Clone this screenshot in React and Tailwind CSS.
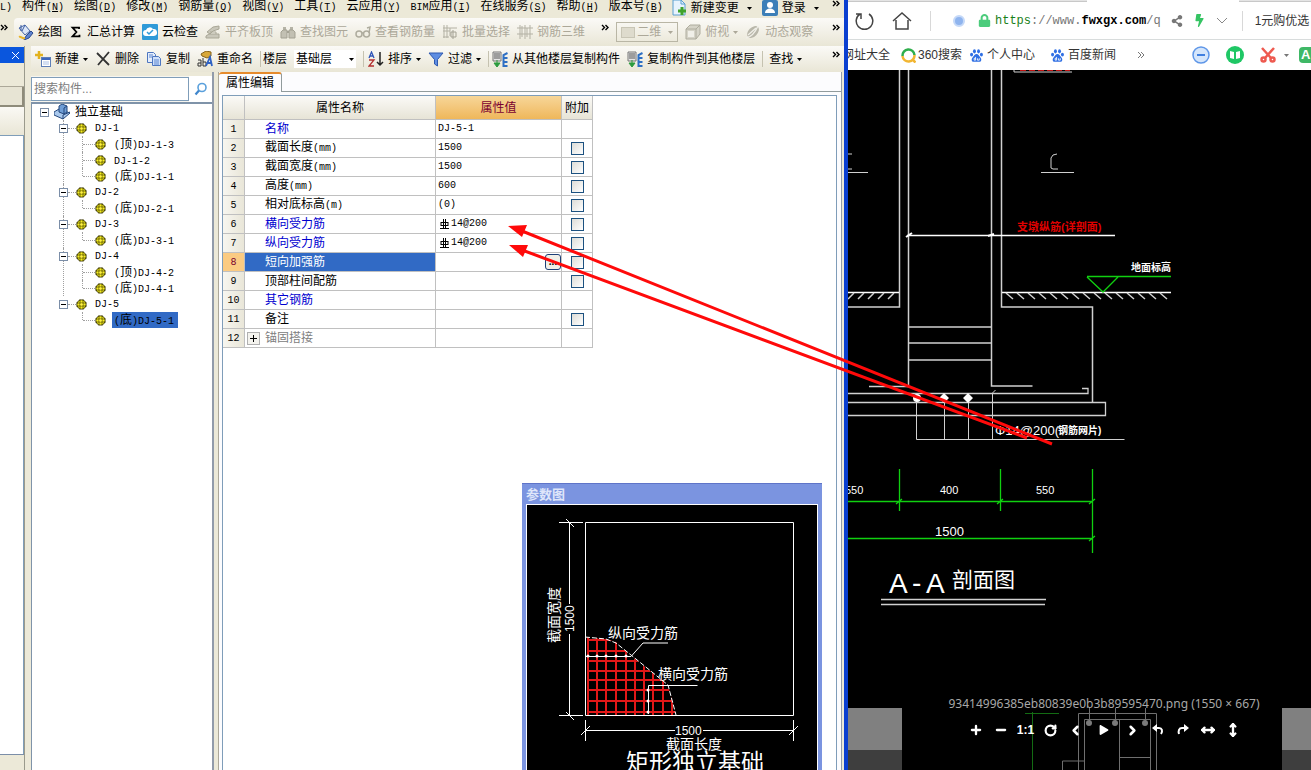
import React, { useState } from "react";
import { Minus, Plus, RotateCw, ChevronLeft, ChevronRight, MoveHorizontal, MoveVertical } from "lucide-react";
import { FaLock, FaShareAlt, FaBolt, FaPlay } from "react-icons/fa";

const menus = [
    ["构件", "N"], ["绘图", "D"], ["修改", "M"], ["钢筋量", "Q"], ["视图", "V"], ["工具", "T"],
    ["云应用", "Y"], ["BIM应用", "I"], ["在线服务", "S"], ["帮助", "H"], ["版本号", "B"],
];

const tree = [
    { name: "DJ-1", children: ["(顶)DJ-1-3", "DJ-1-2", "(底)DJ-1-1"] },
    { name: "DJ-2", children: ["(底)DJ-2-1"] },
    { name: "DJ-3", children: ["(底)DJ-3-1"] },
    { name: "DJ-4", children: ["(顶)DJ-4-2", "(底)DJ-4-1"] },
    { name: "DJ-5", children: ["(底)DJ-5-1"] },
];

const rows = [
    { name: "名称", value: "DJ-5-1", blue: true },
    { name: "截面长度(mm)", value: "1500", check: true },
    { name: "截面宽度(mm)", value: "1500", check: true },
    { name: "高度(mm)", value: "600", check: true },
    { name: "相对底标高(m)", value: "(0)", check: true },
    { name: "横向受力筋", value: "14@200", rebar: true, blue: true, check: true },
    { name: "纵向受力筋", value: "14@200", rebar: true, blue: true, check: true },
    { name: "短向加强筋", value: "", selected: true, check: true },
    { name: "顶部柱间配筋", value: "", check: true },
    { name: "其它钢筋", value: "", blue: true },
    { name: "备注", value: "", check: true },
    { name: "锚固搭接", value: "", group: true },
];

// Latin runs are half the width of a Chinese character
const T = ({ text }) =>
    text.split(/([ -~]+)/).filter(Boolean).map((part, i) =>
        /^[ -~]/.test(part)
            ? <span key={i} className="font-['Liberation_Mono',monospace] text-[10px]">{part}</span>
            : <span key={i}>{part}</span>
    );

const Caret = ({ className = "text-black" }) => (
    <svg className={`w-[5px] h-[3px] shrink-0 ${className}`} viewBox="0 0 5 3"><path d="M0 0h5L2.5 3z" fill="currentColor" /></svg>
);

const More = () => (
    <button aria-label="更多" className="shrink-0">
        <svg className="w-2 h-2" viewBox="0 0 8 8" fill="none" stroke="#000" strokeWidth="1.4"><path d="M1 1l2.500 2.500L1 6M4.500 1L7 3.500L4.500 6" /></svg>
    </button>
);

const Sep = () => <span className="w-px h-4 bg-[#c5c2b0] shrink-0" />;

const Svg = ({ children, className = "w-4 h-4" }) => (
    <svg className={`shrink-0 ${className}`} viewBox="0 0 16 16" fill="none">{children}</svg>
);

const icons = {
    draw: (
        <Svg>
            <path d="M1 4l6-3 5 6-5 4z" fill="#dce6f7" stroke="#4867a8" />
            <path d="M3 1v6M7 1l-3 6" stroke="#3b5aa0" />
            <path d="M8 12l5-5 2 2-4 5-5 2z" fill="#5d83cf" stroke="#2c4a8e" />
            <path d="M1 13c2-1 3 2 6 1" stroke="#e9b52c" strokeWidth="2" />
        </Svg>
    ),
    sum: <Svg className="w-[14px] h-[14px]"><path d="M11.500 4.500V3H4l4.500 5L4 13h8v-2" stroke="#000" strokeWidth="2" /></Svg>,
    cloud: (
        <Svg>
            <rect width="16" height="16" rx="1" fill="#2f9ad8" />
            <path d="M4 12a3 3 0 010-6 4 4 0 017-1 3.500 3.500 0 011 7z" fill="#fff" />
            <path d="M5 8l2 2 4-4" stroke="#2f9ad8" strokeWidth="1.5" />
        </Svg>
    ),
    slab: (
        <Svg>
            <path d="M1 12l3-2h10v4H1zM2 8l6-5 6-1v3L8 7l-3 3z" fill="#c9c7ba" stroke="#a9a797" />
            <path d="M5 8h6v2" stroke="#a9a797" />
        </Svg>
    ),
    find: (
        <Svg>
            <path d="M3 3h3v4H3zM10 3h3v4h-3z" fill="#b5b3a6" />
            <path d="M1 8l2-2h4v8H1zM9 6h4l2 2v6H9z" fill="#c2c0b3" stroke="#a3a193" />
            <path d="M7 8h2" stroke="#a3a193" strokeWidth="2" />
        </Svg>
    ),
    glasses: (
        <Svg>
            <circle cx="4" cy="10" r="3" stroke="#aeac9e" strokeWidth="1.5" />
            <circle cx="11.500" cy="10" r="3" stroke="#aeac9e" strokeWidth="1.5" />
            <path d="M7 9h2M14 9l1-6-3 1" stroke="#aeac9e" strokeWidth="1.5" />
        </Svg>
    ),
    batch: (
        <Svg>
            <path d="M2 1v13M5 1v13M1 4h14M1 7h7M1 13h6M8 4v8" stroke="#b3b1a4" />
            <path d="M9 8h5v5H9zM11 6v9" stroke="#a3a193" />
        </Svg>
    ),
    grid: <Svg><path d="M3 1v14M8 1v14M13 1v14M0 4h16M0 10h16M5 2v11M10 4v9" stroke="#b3b1a4" /></Svg>,
    cube: (
        <Svg>
            <path d="M1 5l4-4h10v9l-4 5H1z" fill="#d5d3c7" stroke="#aeac9e" />
            <path d="M1 5h10v10M11 5l4-4" stroke="#aeac9e" />
            <path d="M3 7h6v6H3z" fill="#f0efe8" />
        </Svg>
    ),
    orbit: (
        <Svg>
            <ellipse cx="8" cy="8" rx="7" ry="4.500" transform="rotate(-45 8 8)" fill="#b9b7aa" />
            <path d="M1 14c5-1 9-5 12-12M3 11l8-7" stroke="#f0efe8" strokeWidth="1.3" />
        </Svg>
    ),
    create: (
        <Svg>
            <path d="M4 0v8M0 4h8" stroke="#e2b21e" strokeWidth="2.500" />
            <rect x="6.500" y="6.500" width="9" height="9" fill="#fff" stroke="#5e7fb8" />
            <path d="M7 8h8" stroke="#3f68bd" strokeWidth="2" />
            <path d="M8 11h6M8 13h6" stroke="#a8bfe6" />
        </Svg>
    ),
    remove: <Svg><path d="M2 2l12 12M14 1L3 14" stroke="#333" strokeWidth="1.8" /></Svg>,
    copy: (
        <Svg>
            <path d="M1.500 1.500h6l2 2v8h-8z" fill="#e5eefc" stroke="#4d76c0" />
            <path d="M6.500 5.500h6l2 2v7h-8z" fill="#cfe0fa" stroke="#4d76c0" />
            <path d="M8 9h5M8 11h5M8 13h5M3 4h4M3 6h3" stroke="#5c86d0" />
        </Svg>
    ),
    rename: (
        <Svg>
            <path d="M4 3l5-3 5 1v4l-4 2-5-2z" fill="#d8a83a" stroke="#86621a" />
            <path d="M1 9h3v6H1v-3h3M6 7v8h3v-4H6" stroke="#333" />
            <path d="M9 15l4-9 2 9M10 12h5" stroke="#2f62c4" strokeWidth="1.800" />
        </Svg>
    ),
    sort: (
        <Svg>
            <path d="M1 7l2.500-6L6 7M2 5h3" stroke="#2f56b8" strokeWidth="1.300" />
            <path d="M1 9h5l-5 6h5" stroke="#b22f2f" strokeWidth="1.300" />
            <path d="M12 1v13M9 11l3 3 3-3" stroke="#222" strokeWidth="1.500" />
        </Svg>
    ),
    filter: <Svg><path d="M1 2h14L9.500 8.500V15l-3-2V8.500z" fill="#5f8ee2" stroke="#2e59b0" /></Svg>,
    floor: (
        <Svg>
            <path d="M1 1h8v9H1z" fill="#e6e6e6" stroke="#777" />
            <path d="M2 3h6M2 5h6M2 7h6" stroke="#555" />
            <path d="M5 9v4M2 12l3 4 3-4z" fill="#2c9b3f" stroke="#2c9b3f" />
            <path d="M15.500 2l-4 2v11h4M11.500 7h4M11.500 11h4" stroke="#2d6fc4" strokeWidth="2" />
        </Svg>
    ),
    change: (
        <Svg>
            <path d="M2 0h8l4 4v11H2z" fill="#e7f3fd" stroke="#5a9fd0" />
            <path d="M10 0v4h4" stroke="#5a9fd0" />
            <path d="M11 7v8M7 11h8" stroke="#3fa32b" strokeWidth="3" />
        </Svg>
    ),
    user: (
        <Svg>
            <rect width="16" height="16" rx="2" fill="#3c7fb8" />
            <circle cx="8" cy="5" r="3" fill="#fff" />
            <path d="M3 13c0-6 10-6 10 0z" fill="#fff" />
        </Svg>
    ),
};

const Tool = ({ icon, label, caret, disabled }) => (
    <button disabled={disabled} className={`flex items-center gap-1 shrink-0 whitespace-nowrap ${disabled ? "text-[#aca899]" : "text-black"}`}>
        {icons[icon]}
        {label && <span>{label}</span>}
        {caret && <Caret className={disabled ? "text-[#aca899]" : "text-black"} />}
    </button>
);

const Gear = () => (
    <svg className="w-[11px] h-[11px] shrink-0" viewBox="0 0 11 11">
        <circle cx="5.500" cy="5.500" r="5" fill="#2f2c00" />
        <circle cx="5.500" cy="5.500" r="4.200" fill="#f6ee20" />
        <path d="M4 0v11M7 0v11M0 4h11M0 7h11" stroke="#4a4600" strokeWidth="0.700" />
        <circle cx="5.500" cy="5.500" r="1.200" fill="#fff04a" />
    </svg>
);

const Toggle = () => (
    <button aria-label="折叠" className="w-[9px] h-[9px] shrink-0 border border-[#7b8ea8] bg-white flex items-center justify-center">
        <span className="w-[5px] h-px bg-black" />
    </button>
);

const MenuBar = () => (
    <div className="flex items-start h-[18px] leading-3 bg-[#ece9d8] pr-1 overflow-hidden shrink-0">
        <div className="flex gap-[10px] whitespace-nowrap">
            <button><T text="L)" /></button>
            {menus.map(([name, key]) => (
                <button key={key}>
                    <T text={name} />
                    <span className="font-['Liberation_Mono',monospace] text-[10px]">(<u>{key}</u>)</span>
                </button>
            ))}
        </div>
        <div className="flex-1 flex items-center gap-2.5 pl-2">
            <button className="flex items-center gap-1 shrink-0 whitespace-nowrap">{icons.change}<span className="pr-1">新建变更</span><Caret /></button>
            <button className="flex items-center gap-1 shrink-0 whitespace-nowrap">{icons.user}<span className="pr-1">登录</span><Caret /></button>
        </div>
        <More />
    </div>
);

const UpperToolbar = () => (
    <div className="flex items-center h-7 bg-[#ece9d8] shrink-0">
        <span className="flex pb-2"><More /></span>
        <div className="flex items-center gap-[7px] h-full flex-1 ml-1.5 pl-1 pr-1 rounded-l bg-linear-to-b from-[#fbfaf7] to-[#e9e6d6]">
            <Tool icon="draw" label="绘图" />
            <Tool icon="sum" label="汇总计算" />
            <Tool icon="cloud" label="云检查" />
            <Tool icon="slab" label="平齐板顶" disabled />
            <Tool icon="find" label="查找图元" disabled />
            <Tool icon="glasses" label="查看钢筋量" disabled />
            <Tool icon="batch" label="批量选择" disabled />
            <Tool icon="grid" label="钢筋三维" disabled />
            <span className="flex items-center pl-[9px] pb-2"><More /></span>
            <div className="flex items-center w-[62px] h-5 pl-1 pr-1 gap-0.5 border border-[#b9b6a5] text-[#aca899] shrink-0">
                <span className="w-[14px] h-[11px] bg-[#dedbcd] border border-[#c8c5b5] shrink-0" />
                <select aria-label="视图维度" disabled className="appearance-none w-[30px]">
                    <option>二维</option>
                </select>
                <Caret className="text-[#aca899]" />
            </div>
            <Tool icon="cube" label="俯视" caret disabled />
            <Tool icon="orbit" label="动态观察" disabled />
            <span className="ml-auto pb-2"><More /></span>
        </div>
    </div>
);

const LowerToolbar = () => (
    <div className="flex items-center gap-[7px] h-[26px] pl-1 pr-1 bg-linear-to-b from-[#fbfaf7] to-[#e9e6d6] shrink-0">
        <Tool icon="create" label="新建" caret />
        <Tool icon="remove" label="删除" />
        <Tool icon="copy" label="复制" />
        <Tool icon="rename" label="重命名" />
        <label htmlFor="floor" className="flex items-center gap-0.5 shrink-0 whitespace-nowrap"><Sep />楼层</label>
        <div className="flex items-center w-[62px] h-[18px] px-0.5 bg-white shrink-0">
            <select id="floor" className="appearance-none flex-1 min-w-0 outline-none">
                <option>基础层</option>
            </select>
            <Caret />
        </div>
        <div className="flex items-center gap-1"><Sep /><Tool icon="sort" label="排序" caret /></div>
        <Tool icon="filter" label="过滤" caret />
        <div className="flex items-center gap-[3px]"><Sep /><Tool icon="floor" label="从其他楼层复制构件" /></div>
        <Tool icon="floor" label="复制构件到其他楼层" />
        <div className="flex items-center gap-[6px]"><Sep /><Tool label="查找" caret /></div>
        <span className="ml-auto pb-2"><More /></span>
    </div>
);

const Dock = () => (
    <aside className="w-[25px] shrink-0 flex flex-col border-r border-[#9a9a8c]">
        <div className="h-4 mt-px bg-[#0a56dd] text-white flex items-center justify-end px-1 shrink-0">
            <button aria-label="关闭">
                <svg className="w-[9px] h-[9px]" viewBox="0 0 9 9" stroke="#fff"><path d="M1 1l7 7M8 1L1 8" /></svg>
            </button>
        </div>
        <div className="h-6 border-b border-[#aca899] bg-[#ece9d8] shrink-0" />
        <div className="h-5 border-r-2 border-b-2 border-[#8e8b7a] bg-[#e7e4d4] shrink-0" />
        <div className="h-7 bg-linear-to-b from-[#faf9f4] to-[#e9e6d6] shrink-0" />
        <div className="flex-1 border-t border-r border-[#7f9db9] bg-white" />
        <div className="h-4 border-t border-[#7b8ea8] bg-[#ece9d8] shrink-0" />
    </aside>
);

const ComponentTree = ({ selected, onSelect }) => (
    <section className="w-[183px] shrink-0 flex flex-col border-r-2 border-[#919baa]">
        <div className="flex h-[26px] mt-1 bg-[#f6f5ef] shrink-0">
            <input aria-label="搜索构件" placeholder="搜索构件..." className="w-[158px] h-6 border border-[#7f9db9] bg-white px-0.5 mt-px outline-none placeholder:text-[#808080]" />
            <button aria-label="搜索" className="flex-1 flex items-center justify-center bg-white">
                <svg className="w-[14px] h-[14px]" viewBox="0 0 14 14" fill="none">
                    <circle cx="8" cy="5.500" r="4" stroke="#5aa0dc" strokeWidth="1.600" />
                    <path d="M5 8.500L1.500 12.500" stroke="#3f86cc" strokeWidth="2.200" />
                </svg>
            </button>
        </div>
        <div className="flex-1 border-t-2 border-l border-[#7f93a9] bg-white leading-4">
            <div className="flex items-center h-4 pl-2 gap-[5px]">
                <Toggle />
                <Svg>
                    <path d="M0 8l5-3 11 4-7 6-9-4z" fill="#a9c8ec" stroke="#23477c" />
                    <path d="M5 2l3-2 5 2v6l-3 2-5-2z" fill="#6f9ed6" stroke="#23477c" />
                    <path d="M9 15v-4l7-3M10 10V4l3-2" stroke="#23477c" />
                </Svg>
                <span>独立基础</span>
            </div>
            <ul className="ml-[31px]">
                {tree.map((node, n) => (
                    <li key={node.name} className={n < tree.length - 1 ? "border-l border-dotted border-[#a0a0a0]" : "border-l border-transparent"}>
                        <div className="flex items-center h-4 -ml-[5px]">
                            <Toggle />
                            <span className="w-2 border-t border-dotted border-[#a0a0a0]" />
                            <Gear />
                            <button className="ml-2"><T text={node.name} /></button>
                        </div>
                        <ul className="ml-[18px]">
                            {node.children.map((name, i) => (
                                <li key={name} className="flex items-center h-4">
                                    <span className={`self-start border-dotted border-[#a0a0a0] border-l w-px ${i === node.children.length - 1 ? "h-2" : "h-4"}`} />
                                    <span className="w-3 border-t border-dotted border-[#a0a0a0]" />
                                    <Gear />
                                    <button
                                        onClick={() => onSelect(name)}
                                        className={`ml-[6px] h-4 pl-0.5 pr-1 whitespace-nowrap ${selected === name ? "bg-[#316ac5]" : ""}`}
                                    >
                                        <T text={name} />
                                    </button>
                                </li>
                            ))}
                        </ul>
                    </li>
                ))}
            </ul>
        </div>
    </section>
);

const PropertyTable = () => (
    <table className="table-fixed w-[370px] border-separate border-spacing-0 leading-4">
        <colgroup>
            <col className="w-[22px]" />
            <col className="w-[191px]" />
            <col className="w-[126px]" />
            <col className="w-[31px]" />
        </colgroup>
        <thead>
            <tr className="h-6 bg-linear-to-b from-[#fbfaf7] to-[#e6e3d5]">
                <th aria-label="序号" className="border-r border-b border-[#c0c0c0]" />
                <th className="font-normal p-0 border-r border-b border-[#c0c0c0]">属性名称</th>
                <th className="font-normal p-0 border-r border-b border-[#c0c0c0] bg-linear-to-b from-[#f7d698] to-[#efb75a] text-[#7a0030]">属性值</th>
                <th className="font-normal p-0 border-r border-b border-[#c0c0c0]">附加</th>
            </tr>
        </thead>
        <tbody>
            {rows.map((row, i) => (
                <tr key={row.name} className="h-[19px]">
                    <td className={`p-0 text-center border-r border-b border-[#c0c0c0] ${row.selected ? "bg-[#fbcb82] text-[#7a0030]" : "bg-linear-to-r from-[#f7f6f0] to-[#e9e6d8]"}`}>
                        <T text={String(i + 1)} />
                    </td>
                    <td className={`p-0 border-r border-b border-[#c0c0c0] ${row.selected ? "bg-[#316ac5] text-white" : row.blue ? "text-[#0000d0]" : row.group ? "text-[#808080]" : ""}`}>
                        <div className="flex items-center h-[18px]">
                            <span className="w-5 pl-0.5 flex">
                                {row.group && (
                                    <button aria-label="展开" className="w-[13px] h-[13px] border border-[#b0b0b0] bg-[#f4f3ee] flex items-center justify-center">
                                        <svg className="w-[7px] h-[7px]" viewBox="0 0 7 7" stroke="#000"><path d="M0 3.500h7M3.500 0v7" /></svg>
                                    </button>
                                )}
                            </span>
                            <span><T text={row.name} /></span>
                        </div>
                    </td>
                    <td className="p-0 border-r border-b border-[#c0c0c0]">
                        <div className="flex items-center h-[18px] pl-0.5">
                            {row.rebar && (
                                <svg className="w-[9px] h-[10px] ml-0.5 mr-0.5" viewBox="0 0 9 10" fill="none" stroke="#000">
                                    <path d="M3.500 0v9M5.500 0v9M1 3.500h7M1 3v4M8 3v4M1 6.500h7M0 9.500h9" />
                                </svg>
                            )}
                            <T text={row.value} />
                            {row.selected && (
                                <button className="ml-auto w-4 h-4 rounded-[3px] border border-[#1c3f77] bg-[#f0efe8] leading-[8px] text-[10px] font-bold">...</button>
                            )}
                        </div>
                    </td>
                    <td className="p-0 border-r border-b border-[#c0c0c0]">
                        {row.check && (
                            <div className="flex justify-center">
                                <input type="checkbox" aria-label={row.name} className="appearance-none w-[13px] h-[13px] border border-[#1c5180] bg-linear-to-br from-[#dcdcd7] to-white checked:bg-[#316ac5]" />
                            </div>
                        )}
                    </td>
                </tr>
            ))}
        </tbody>
    </table>
);

const ParameterWindow = () => (
    <div className="absolute left-[303px] top-[411px] bottom-0 w-[300px] flex flex-col bg-[#7b94e0] border-t border-[#5f74c8] overflow-hidden">
        <h2 className="h-5 pl-1 leading-[22px] text-[13px] font-bold text-[#dfe6fa] shrink-0">参数图</h2>
        <div className="flex-1 mx-1 border border-b-0 border-white bg-black overflow-hidden">
            <svg width="290" height="265" viewBox="527 505 290 265" fill="none" stroke="#fff" fontSize="14" fontFamily="Liberation Sans, Noto Sans CJK SC, sans-serif">
                <defs>
                    <clipPath id="mesh"><path d="M585 637L606 639L616 642L631 656L668 685L676 715H585z" /></clipPath>
                </defs>
                <g clipPath="url(#mesh)" stroke="#e01818" strokeWidth="2">
                    {[588, 597, 606, 616, 626, 635, 644, 653, 663, 672].map((x) => <path key={x} d={`M${x} 636V715`} />)}
                    {[640, 651, 661, 671, 680, 690, 701, 712].map((y) => <path key={y} d={`M587 ${y}H678`} />)}
                </g>
                <path d="M585.500 522.500h208v193h-208z" />
                <path d="M585 637l21 2l10 4l15 12l37 30l8 30" strokeDasharray="5 2" />
                <path d="M586 656.500H631l12-13.500h25M648.500 714V685.500h49" />
                <g fill="#fff" stroke="none">
                    {[588, 597, 606, 616, 626].map((x) => <circle key={x} cx={x} cy="656" r="1.500" />)}
                    {[690, 701, 712].map((y) => <circle key={y} cx="648" cy={y} r="1.500" />)}
                </g>
                <path d="M569.500 522V604M569.500 634V716M559 522.500h24M559 715.500h24M566 519l8 8M566 712l8 8" />
                <path d="M585.500 720v21M793.500 720v21M585 730.500h90M703 730.500h91M581 735l9-9M789 735l9-9" />
                <g fill="#fff" stroke="none">
                    <text x="608" y="638">纵向受力筋</text>
                    <text x="658" y="679">横向受力筋</text>
                    <text x="675" y="735" fontSize="12">1500</text>
                    <text x="666" y="749">截面长度</text>
                    <text x="626" y="770" fontSize="23" fontFamily="Liberation Serif, Noto Sans CJK SC, serif">矩形独立基础</text>
                    <text transform="translate(559 643) rotate(-90)">截面宽度</text>
                    <text transform="translate(574 632) rotate(-90)" fontSize="12">1500</text>
                </g>
            </svg>
        </div>
    </div>
);

const PropertyPanel = () => (
    <section className="relative flex-1 min-w-0 flex flex-col ml-1 border-l border-[#aca899] bg-[#fcfcfe]">
        <div className="flex h-5 shrink-0">
            <button className="w-[63px] border-t-2 border-r border-t-[#e68b2c] border-r-[#919b9c] rounded-t-[3px] leading-4">属性编辑</button>
            <span className="flex-1 border-b border-[#919b9c]" />
        </div>
        <div className="flex-1 mt-[3px] ml-[3px] mr-1 border-t border-l border-r border-[#7f9db9] bg-white overflow-hidden">
            <PropertyTable />
        </div>
        <ParameterWindow />
    </section>
);

const hatch = (from, to, step, dx) => {
    const d = [];
    for (let x = from; x < to; x += step) d.push(`M${x} 293l${dx} 6`);
    return d.join("");
};

const SectionDrawing = () => (
    <svg className="absolute left-0 top-0" width="463" height="700" viewBox="848 70 463 700" fill="none" stroke="#d0d0d0" fontFamily="Liberation Sans, Noto Sans CJK SC, sans-serif">
        <path d="M899.500 70V307H848M908.500 70V386M991.500 70V386h41M1001.500 70V307H1092.500V403" strokeWidth="1.500" />
        <path d="M1014 70v2h58" />
        <path d="M1020 70.500h50" stroke="#c01010" strokeDasharray="6 3" />
        <path d="M848 154h4M848 169h4M848 172.500h20M1057 154l-4 1l-2 3v10l2 1h5M1041 172.500h33" />
        <path d="M907 235.500h208" stroke="#fff" strokeWidth="1.500" />
        <path d="M906 237l6-4M988 236l6-2" stroke="#fff" strokeWidth="2" />
        <path d="M848 292.500h51M1002 292.500h169" stroke="#fff" strokeWidth="1.500" />
        <path d={hatch(854, 899, 10, -6)} strokeWidth="1.500" />
        <path d={hatch(1006, 1170, 11, 7)} strokeWidth="1.500" />
        <path d="M1087 276.500h84M1087 277l16 15l15-15" stroke="#10d010" strokeWidth="1.300" />
        <path d="M908 327h83M908 343h83M908 360h83" strokeWidth="1.300" />
        <path d="M869 386.500h40M848 393.500h240v-5h-6M848 402.500h257.500v13H848" strokeWidth="1.300" />
        <path d="M916.500 398V439.500h208M944.500 398v41M968.500 398v41M992.500 439v-46l3-3" />
        <g fill="#fff" stroke="none">
            <circle cx="917" cy="398" r="4" />
            <path d="M944 393l5 5l-5 5l-5-5zM968 393l5 5l-5 5l-5-5z" />
        </g>
        <path d="M848 501.500h244M848 538.500h244M899.500 469v42M1000.500 469v42M1092.500 469v84M896 504l6-5M997 504l6-5M1089 504l6-5M1089 541l6-5" stroke="#10d010" strokeWidth="1.300" />
        <path d="M881 599.500h165M881 604.500h164" strokeWidth="1.500" />
        <g fill="#fff" stroke="none">
            <text x="1017" y="231" fontSize="11" fontWeight="bold" fill="#e00000">支墩纵筋(详剖面)</text>
            <text x="1131" y="271" fontSize="10" fontWeight="bold">地面标高</text>
            <text x="995" y="435" fontSize="13">Φ14@200(</text>
            <text x="1058" y="434" fontSize="10" fontWeight="bold">钢筋网片)</text>
            <text x="845" y="494" fontSize="11">550</text>
            <text x="940" y="494" fontSize="11">400</text>
            <text x="1036" y="494" fontSize="11">550</text>
            <text x="935" y="536" fontSize="13">1500</text>
            <text x="889" y="593" fontSize="28">A</text>
            <text x="912" y="592" fontSize="28">-</text>
            <text x="926" y="593" fontSize="28">A</text>
            <text x="952" y="587" fontSize="21">剖面图</text>
        </g>
        {/* thumbnail strip under the viewer controls */}
        <g stroke="#6f6f6f">
            <path d="M1078.500 770V713.500h78V770M1084.500 770V719.500h66V770M1119.500 720v50M1089.500 708v14M1115.500 708v14M1145.500 708v14M1062.500 770v-9h22M1120 757.500h30" />
            <path d="M1025 713.500h34M1032.500 712v58" stroke="#136b13" />
        </g>
        <g fill="#7a7a7a" stroke="none">
            <circle cx="1089" cy="723" r="3" />
            <circle cx="1115" cy="723" r="3" />
            <circle cx="1145" cy="723" r="3" />
        </g>
    </svg>
);

const TurnLeft = () => (
    <svg className="w-3 h-3" viewBox="0 0 12 12" fill="none" stroke="#fff" strokeWidth="2">
        <path d="M3 4h4c3 0 4 3 2 6" />
        <path d="M5 0v8L0 4z" fill="#fff" stroke="none" />
    </svg>
);

const TurnRight = () => (
    <svg className="w-3 h-3" viewBox="0 0 12 12" fill="none" stroke="#fff" strokeWidth="2">
        <path d="M9 4H5C2 4 1 7 2 10" />
        <path d="M7 0v8l5-4z" fill="#fff" stroke="none" />
    </svg>
);

const viewerButtons = [
    ["放大", <Plus size={14} strokeWidth={4} />],
    ["缩小", <Minus size={14} strokeWidth={4} />],
    ["原始大小", <span className="text-[12px] font-bold leading-none">1:1</span>],
    ["重置", <RotateCw size={13} strokeWidth={4} />],
    ["上一张", <ChevronLeft size={15} strokeWidth={4} />],
    ["播放", <FaPlay size={10} />],
    ["下一张", <ChevronRight size={15} strokeWidth={4} />],
    ["向左旋转", <TurnLeft />],
    ["向右旋转", <TurnRight />],
    ["左右翻转", <MoveHorizontal size={14} strokeWidth={4} />],
    ["上下翻转", <MoveVertical size={14} strokeWidth={4} />],
];

const ImageViewer = () => (
    <main className="relative flex-1 min-h-0 flex items-end bg-black overflow-hidden">
        <SectionDrawing />
        <div className="w-[54px] h-[62px] shrink-0 border-b-[20px] border-[#3e3e3e] bg-[#808080]" />
        <div className="relative flex-1 h-[74px] pl-6 flex flex-col items-center text-white">
            <p className="h-4 leading-4 text-[12px] text-[#a8a8a8] whitespace-nowrap font-['Noto_Sans',sans-serif]">93414996385eb80839e0b3b89595470.png (1550 × 667)</p>
            <div className="flex mt-2">
                {viewerButtons.map(([label, icon]) => (
                    <button key={label} aria-label={label} className={`h-5 flex items-center justify-center ${label === "播放" ? "w-8" : "w-[25px]"}`}>{icon}</button>
                ))}
            </div>
        </div>
        <div className="w-[29px] h-[62px] shrink-0 border-b-[20px] border-[#3e3e3e] bg-[#808080]" />
    </main>
);

const Baidu = () => (
    <svg className="w-[13px] h-[13px]" viewBox="0 0 14 14" fill="#2f6fe4">
        <ellipse cx="4.800" cy="2.500" rx="1.600" ry="2.300" />
        <ellipse cx="9.200" cy="2.500" rx="1.600" ry="2.300" />
        <ellipse cx="1.700" cy="6" rx="1.600" ry="2" />
        <ellipse cx="12.300" cy="6" rx="1.600" ry="2" />
        <path d="M7 5.500c2 0 2.500 2 4 3.300c2 2 1.300 5-1 5c-1.500 0-4.500 0-6 0c-2.300 0-3-3-1-5C4.500 7.500 5 5.500 7 5.500z" />
        <path d="M6 8.500v3.500H4.500v-2H6M8 10v2h2v-2" fill="none" stroke="#fff" strokeWidth="0.900" />
    </svg>
);

const Browser = () => (
    <div className="flex-[463] min-w-0 flex flex-col bg-white overflow-hidden text-[#333]">
        <div className="flex h-0.5 shrink-0 bg-[#e4e4e4] border-b border-[#c8c8c8]">
            <span className="w-[152px] h-0.5 ml-[239px] bg-white" />
        </div>
        <div className="flex items-center h-[38px] pl-[7px] border-b border-[#d8dcdc] shrink-0 whitespace-nowrap">
            <button aria-label="刷新">
                <svg className="w-5 h-5" viewBox="0 0 20 20" fill="none" stroke="#444" strokeWidth="1.500"><path d="M14 3a8.300 8.300 0 11-9 0M1 3h5v5" /></svg>
            </button>
            <button aria-label="主页" className="ml-[17px]">
                <svg className="w-5 h-5" viewBox="0 0 20 20" fill="none" stroke="#444" strokeWidth="1.500"><path d="M1 10l9-8l9 8M4 9v9h12V9" /></svg>
            </button>
            <span className="w-px h-5 ml-[18px] bg-[#d8d8d8]" />
            <span className="w-3 h-3 ml-[22px] rounded-full border-2 border-[#c5d9f8] bg-[#8fb4ee]" />
            <FaLock size={13} className="ml-[13px] text-[#4ccc7c]" />
            <a href="https://www.fwxgx.com/q" className="ml-1 font-['Liberation_Mono',monospace] text-[12px] text-[#777]">
                <span className="text-[#188018]">https</span>://www.<span className="text-black font-bold">fwxgx.com</span>/q
            </a>
            <FaShareAlt size={12} className="ml-2.5 text-[#777]" />
            <FaBolt size={13} className="ml-2.5 text-[#35c463]" />
            <svg className="w-3 h-2 ml-2.5" viewBox="0 0 12 8" fill="none" stroke="#888"><path d="M1 1l5 5l5-5" /></svg>
            <span className="w-px h-5 ml-3.5 bg-[#d8d8d8]" />
            <span className="ml-3">1元购优选</span>
        </div>
        <div className="flex items-center h-[30px] shrink-0 whitespace-nowrap">
            <a href="#sites" className="-ml-1.5">网址大全</a>
            <a href="#360" className="flex items-center gap-0.5 ml-[11px]">
                <svg className="w-[15px] h-[15px]" viewBox="0 0 15 15" fill="none" strokeWidth="2.500">
                    <path d="M1.500 8a6 6 0 0112-1" stroke="#2fae4c" />
                    <path d="M13.500 7a6 6 0 01-12 1M12 12l2.500 2.500" stroke="#f2b632" />
                </svg>
                <span>360搜索</span>
            </a>
            <a href="#me" className="flex items-center gap-1 ml-2"><Baidu />个人中心</a>
            <a href="#news" className="flex items-center gap-1 ml-4"><Baidu />百度新闻</a>
            <button aria-label="更多书签" className="ml-[21px]">
                <svg className="w-2 h-2" viewBox="0 0 8 8" fill="none" stroke="#777"><path d="M1 1l3 3-3 3M4 1l3 3-3 3" /></svg>
            </button>
            <span className="w-px h-3.5 ml-[27px] bg-[#d0d0d0]" />
            <svg className="w-[18px] h-[18px] ml-5 shrink-0" viewBox="0 0 18 18"><circle cx="9" cy="9" r="8" fill="#d5e6fb" stroke="#5f97e8" strokeWidth="1.500" /><path d="M5 9h8" stroke="#3f7fe0" strokeWidth="2" /></svg>
            <svg className="w-[18px] h-[18px] ml-4 shrink-0" viewBox="0 0 18 18"><circle cx="9" cy="9" r="9" fill="#1fc765" /><path d="M4 5l4 1v7l-4-1zM14 5l-4 1v7l4-1z" fill="#fff" /></svg>
            <svg className="w-4 h-4 ml-4 shrink-0" viewBox="0 0 16 16" fill="none" stroke="#ee5a50" strokeWidth="2.500"><path d="M2 1l9 10M14 1L5 11" /><circle cx="3.500" cy="12.500" r="2" /><circle cx="12.500" cy="12.500" r="2" /></svg>
            <span className="ml-2"><Caret className="text-[#777]" /></span>
            <span className="w-4 h-4 ml-2.5 pl-0.5 rounded-sm bg-[#3fb866] text-white font-bold text-[13px] leading-4 shrink-0">A</span>
        </div>
        <ImageViewer />
    </div>
);

const Arrows = () => (
    <svg className="absolute left-0 top-0 pointer-events-none" width="1311" height="770" stroke="#ff0a0a" strokeWidth="3" fill="#ff0a0a">
        <path d="M522 231L1052 444M522 250L1027 438" fill="none" />
        <path d="M508 226l19-1l-5 12zM509 245l19 0l-5 12z" stroke="none" />
    </svg>
);

const App = () => {
    const [selected, setSelected] = useState("(底)DJ-5-1");

    return (
        <div className="relative flex h-screen overflow-hidden text-[12px] text-black font-['Liberation_Sans','Noto_Sans_CJK_SC',sans-serif]">
            <div className="flex-[848] min-w-0 flex bg-[#ece9d8]">
                <div className="flex-1 min-w-0 flex flex-col">
                    <MenuBar />
                    <UpperToolbar />
                    <div className="flex-1 min-h-0 flex">
                        <Dock />
                        <div className="flex-1 min-w-0 flex flex-col ml-[6px]">
                            <LowerToolbar />
                            <div className="flex-1 min-h-0 flex">
                                <ComponentTree selected={selected} onSelect={setSelected} />
                                <PropertyPanel />
                                <span className="w-[3px] border-l border-[#919baa] shrink-0" />
                            </div>
                        </div>
                    </div>
                </div>
                <span className="w-1 bg-[#0a3fd0] shrink-0" />
            </div>
            <Browser />
            <Arrows />
        </div>
    );
};

export default App;
